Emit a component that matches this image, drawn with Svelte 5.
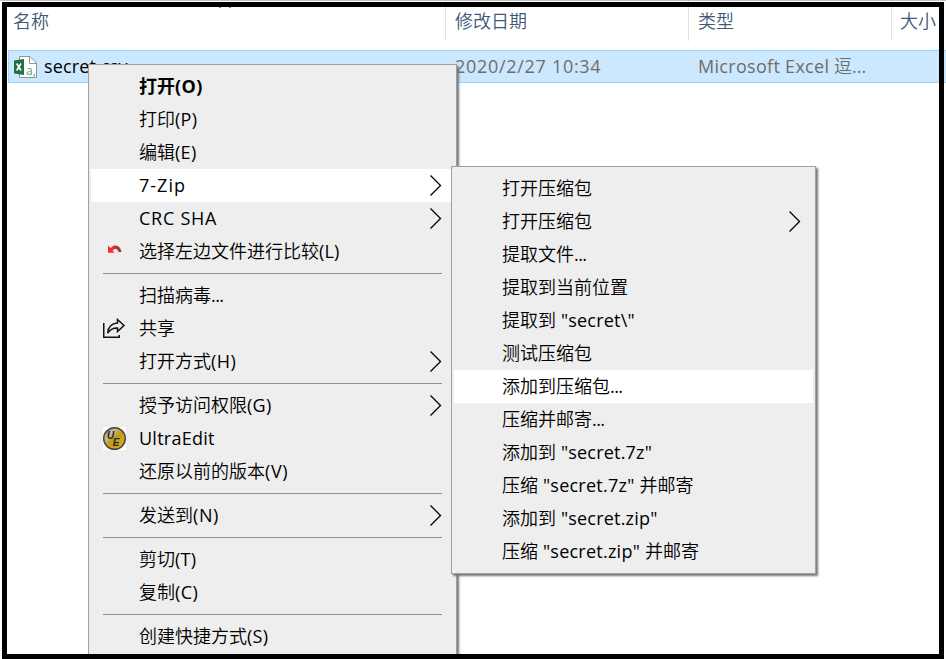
<script>
  const mainMenu = [
    { label: '打开', latin: '(O)', bold: true, spacing: 0.4 },
    { label: '打印', latin: '(P)', spacing: 0.3 },
    { label: '编辑', latin: '(E)', spacing: 0.3 },
    { latin: '7-Zip', sub: true, active: true, spacing: 1 },
    { latin: 'CRC SHA', sub: true, spacing: 0.75 },
    { label: '选择左边文件进行比较', latin: '(L)', icon: 'undo', spacing: 0.2 },
    { separator: true },
    { label: '扫描病毒', latin: '...', spacing: -0.6 },
    { label: '共享', icon: 'share' },
    { label: '打开方式', latin: '(H)', sub: true, spacing: 0.4 },
    { separator: true },
    { label: '授予访问权限', latin: '(G)', sub: true, spacing: 0.3 },
    { latin: 'UltraEdit', icon: 'ue', spacing: 0.25 },
    { label: '还原以前的版本', latin: '(V)', spacing: 0.6 },
    { separator: true },
    { label: '发送到', latin: '(N)', sub: true, spacing: 0.6 },
    { separator: true },
    { label: '剪切', latin: '(T)', spacing: 0.3 },
    { label: '复制', latin: '(C)', spacing: 0.4 },
    { separator: true },
    { label: '创建快捷方式', latin: '(S)', spacing: 0.3 }
  ];
  const zipMenu = [
    { label: '打开压缩包' },
    { label: '打开压缩包', sub: true },
    { label: '提取文件', latin: '...', spacing: -0.6 },
    { label: '提取到当前位置' },
    { label: '提取到', latin: ' "secret\\"', spacing: 0.2 },
    { label: '测试压缩包' },
    { label: '添加到压缩包', latin: '...', active: true, spacing: -0.6 },
    { label: '压缩并邮寄', latin: '...', spacing: -0.6 },
    { label: '添加到', latin: ' "secret.7z"', spacing: 0.2 },
    { label: '压缩', latin: ' "secret.7z" ', tail: '并邮寄', spacing: 0.24 },
    { label: '添加到', latin: ' "secret.zip"', spacing: 0.2 },
    { label: '压缩', latin: ' "secret.zip" ', tail: '并邮寄', spacing: 0.24 }
  ];
</script>

{#snippet rows(items)}
  {#each items as item}
    {#if item.separator}
      <div class="separator"></div>
    {:else}
      <div class="item" class:active={item.active} class:bold={item.bold}>
        <span class="icon">
          {#if item.icon === 'undo'}
            <svg width="24" height="24" viewBox="0 0 24 24">
              <path d="M10 7C13 4 18.500 5.500 19.500 12H16.500C15.500 9 13.500 8 11.500 9.500Z" fill="#a33b3b" />
              <path d="M6 5.500L8.500 8L11.500 6L13 8.500L10.500 10.500L12.500 12.800H6Z" fill="#f82b2b" />
            </svg>
          {:else if item.icon === 'share'}
            <svg width="24" height="24" viewBox="0 0 24 24" fill="none" stroke="#111" stroke-width="1.5">
              <path d="M1.750 6V20.250H17.250V18" />
              <path d="M15.500 2.500L22 8.500L15.500 14.500V11C11 10.900 8 12.200 5.700 16.200C6 10.500 9.500 6.500 15.500 6Z" />
            </svg>
          {:else if item.icon === 'ue'}
            <svg width="24" height="24" viewBox="0 0 24 24">
              <defs>
                <linearGradient id="gold" x1="0" y1="0" x2="1" y2="1">
                  <stop offset="0" stop-color="#77736a" />
                  <stop offset=".3" stop-color="#c6bd98" />
                  <stop offset=".5" stop-color="#c09b1e" />
                  <stop offset="1" stop-color="#e1b51c" />
                </linearGradient>
              </defs>
              <path fill="#fff" d="M1 0h23v23H1z" />
              <circle cx="12.500" cy="11.500" r="10.800" fill="url(#gold)" stroke="#454436" stroke-width="1.400" />
              <text x="5" y="12" class="ue">U<tspan dx="-1.5" dy="7">E</tspan></text>
            </svg>
          {/if}
        </span>
        <span class="label">{item.label ?? ''}<span class="latin" style:letter-spacing="{item.spacing ?? 0}px">{item.latin ?? ''}</span>{item.tail ?? ''}</span>
        {#if item.sub}
          <svg class="arrow" width="14" height="22" viewBox="0 0 14 22"><path d="M1.500 .5L11.500 10.500L1.500 20.500" /></svg>
        {/if}
      </div>
    {/if}
  {/each}
{/snippet}

<div class="window">
  <header>
    <div class="col name">名称</div>
    <div class="col date">修改日期</div>
    <div class="col type">类型</div>
    <div class="col size">大小</div>
  </header>
  <div class="file">
    <div class="filename">
      <svg width="24" height="24" viewBox="0 0 24 24">
        <path d="M6.500 1.500H17L23.500 8V22.500H6.500Z" fill="#fff" stroke="#8c9693" />
        <path d="M16.500 1.500V8.500H23.500" fill="none" stroke="#8c9693" />
        <path d="M1 5.500L11 4V20L1 18.500Z" fill="#1e7145" />
        <path d="M3.700 8.500L8 15.500M8 8.500L3.700 15.500" stroke="#fff" stroke-width="1.700" />
        <text x="13" y="20" class="small-a">a,</text>
      </svg>
      <span>secret.csv</span>
    </div>
    <div class="filedate">2020/2/27 10:34</div>
    <div class="filetype"><span>Microsoft Excel</span> 逗<span class="dots">...</span></div>
  </div>

  <svg class="sort" width="14" height="2" viewBox="0 0 14 2"><path d="M1 .5h2M11 .5h2" stroke="#777" /></svg>
  <div class="menu main">{@render rows(mainMenu)}</div>
  <div class="menu zip">{@render rows(zipMenu)}</div>
  <div class="frame"></div>
</div>

<style>
  .window {
    position: relative;
    width: 946px;
    height: 659px;
    overflow: hidden;
    box-sizing: border-box;
    border-top: 1px solid #c4c4c4;
    background: #fff;
    color: #000;
    font: 350 18px/33px 'Open Sans', 'Noto Sans CJK SC', sans-serif;
    white-space: nowrap;
  }
  header {
    display: flex;
    height: 40px;
    color: #3f5878;
  }
  .col {
    box-sizing: border-box;
    padding-left: 9px;
    padding-top: 4px;
    border-right: 1px solid #e2e2e2;
  }
  .name { width: 446px; padding-left: 13px; }
  .date { width: 243px; }
  .type { width: 203px; }
  .size { width: 54px; border: 0; padding-left: 8px; }
  .file {
    display: flex;
    align-items: center;
    box-sizing: border-box;
    height: 33px;
    margin: 9px 0 0 8px;
    border: 1px solid #99d1ff;
    border-right: 0;
    background: #cce8ff;
    line-height: 31px;
  }
  .filename {
    display: flex;
    align-items: center;
    gap: 7px;
    width: 442px;
    padding-left: 4px;
    font-weight: 400;
    letter-spacing: .15px;
  }
  .filedate, .filetype { color: #6d6d6d; }
  .filedate { width: 243px; font-weight: 400; letter-spacing: .7px; }
  .filetype span { font-weight: 400; letter-spacing: .3px; }
  .filetype .dots { letter-spacing: 0; }
  .small-a { font: 12px 'Open Sans', sans-serif; fill: #55a578; }
  .sort { position: absolute; left: 218px; top: 6px; }
  .menu {
    position: absolute;
    box-sizing: border-box;
    padding: 5px 2px;
    border: 1px solid #a0a0a0;
    background: #eee;
    box-shadow: 2px 2px 2px #777;
  }
  .main { left: 88px; top: 63px; width: 369px; height: 620px; }
  .zip { left: 451px; top: 165px; width: 365px; height: 408px; }
  .item { display: flex; align-items: center; height: 33px; }
  .active { background: #fff; }
  .bold, .bold .latin { font-weight: 700; }
  .icon { display: flex; width: 24px; height: 24px; margin: 0 13px 0 11px; }
  .label { flex: 1; white-space: pre; }
  .latin { font-weight: 400; }
  .arrow { margin-right: 11px; fill: none; stroke: #000; stroke-width: 1.3; }
  .ue { font: italic 900 10px 'Liberation Sans', sans-serif; fill: #292929; }
  .separator { height: 1px; margin: 5px 12px; background: #919191; }
  .frame {
    position: absolute;
    box-sizing: border-box;
    left: 2px;
    top: 1px;
    width: 942px;
    height: 657px;
    border: 5px solid #000;
    pointer-events: none;
  }
</style>
